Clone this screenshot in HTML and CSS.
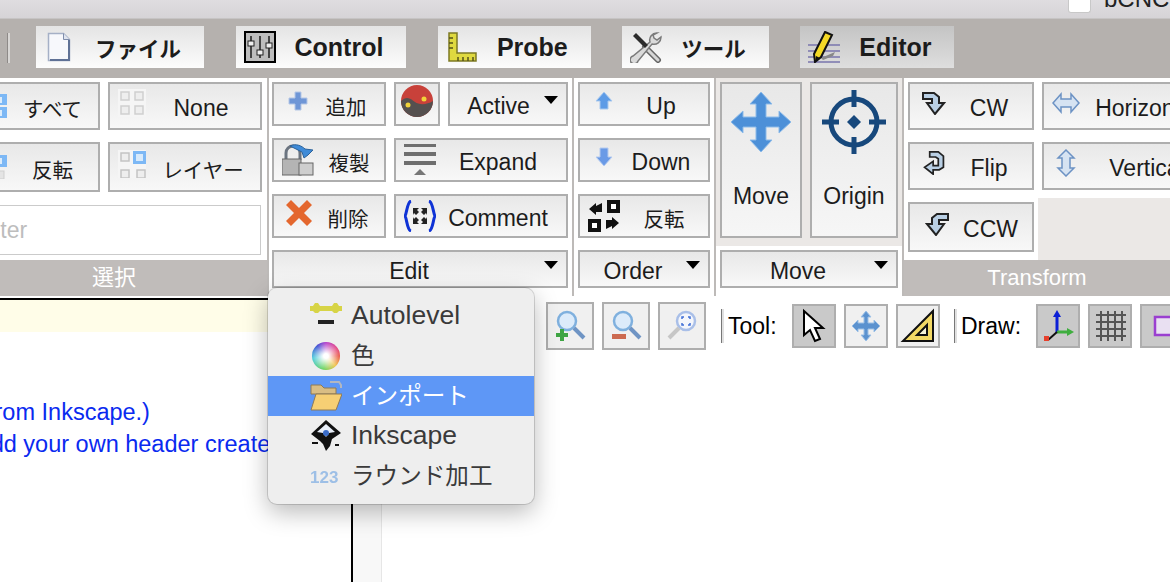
FILE: index.html
```html
<!DOCTYPE html>
<html lang="ja">
<head>
<meta charset="utf-8">
<title>bCNC</title>
<link rel="stylesheet" href="styles.css">
</head>
<body>
<div class="titlebar"><span class="winbox"></span><span class="wintitle">bCNC</span></div>

<div class="tabbar">
  <span class="tabsep"></span>
  <div class="tab">
    <svg class="tabicon" viewBox="0 0 32 32"><path d="M4.500 2.500h15l6 6v21h-21z" fill="#f7f8fc" stroke="#a5b0c6" stroke-width="1.500"/><path d="M19.500 2.500v6h6" fill="#dfe4ee" stroke="#7f8dab"/><path d="M25 9v20H6" fill="none" stroke="#5f7196" stroke-width="2"/></svg>
    <span class="cj">ファイル</span>
  </div>
  <div class="tab">
    <svg class="tabicon" viewBox="0 0 32 32"><rect x="1" y="1" width="30" height="30" fill="#bdbdbd" stroke="#000" stroke-width="2"/><path d="M7 5v22M16 5v22M25 5v22" stroke="#444" stroke-width="2"/><rect x="4" y="10" width="6" height="5" fill="#eee" stroke="#222"/><rect x="13" y="19" width="6" height="5" fill="#eee" stroke="#222"/><rect x="22" y="12" width="6" height="5" fill="#eee" stroke="#222"/></svg>
    <span>Control</span>
  </div>
  <div class="tab tab-probe">
    <svg class="tabicon" viewBox="0 0 32 32"><path d="M3 2h8v20h19v8H3z" fill="#dfd93f" stroke="#7d7a24" stroke-width="1.500"/><path d="M3 7h4M3 12h4M3 17h4M12 30v-4M17 30v-4M22 30v-4M27 30v-4" stroke="#55531a" stroke-width="1.500"/></svg>
    <span>Probe</span>
  </div>
  <div class="tab">
    <svg class="tabicon" viewBox="0 0 32 32"><path d="M15 16l13 13" stroke="#666" stroke-width="6" stroke-linecap="round"/><path d="M15 16l13 13" stroke="#d6d6d6" stroke-width="3" stroke-linecap="round"/><path d="M27 2a7 7 0 0 0-7 9L3 25a4 4 0 1 0 5 5l14-17a7 7 0 0 0 9-7l-4 3-3-2-1-3z" fill="#dadada" stroke="#7b7b7b" stroke-width="1.500"/><path d="M3 5l3-3 12 12-3 3z" fill="#2c2c2c"/></svg>
    <span class="cj">ツール</span>
  </div>
  <div class="tab tab-active">
    <svg class="tabicon" viewBox="0 0 32 32"><path d="M0 14h32M0 20h32M0 26h32M0 31h32" stroke="#7a76ad" stroke-width="1.500"/><path d="M13 27l14-6-2 4-10 4z" fill="#888"/><path d="M17 1l7 3-11 22-6 5-1-8z" fill="#f4d926" stroke="#111" stroke-width="2"/><path d="M8 25l-1 6 5-4z" fill="#111"/></svg>
    <span>Editor</span>
  </div>
</div>

<div class="ribbon">
  <section class="group g-select">
    <div class="select-grid">
      <button class="btn"><svg class="ic ic-all" viewBox="0 0 24 24"><rect x="0" y="0" width="24" height="11" fill="#7db8f5"/><rect x="0" y="13" width="24" height="11" fill="#7db8f5"/><rect x="13" y="3" width="6" height="6" fill="#dcecfb"/><rect x="13" y="16" width="6" height="6" fill="#dcecfb"/></svg><span class="lbl cj">すべて</span></button>
      <button class="btn"><svg class="ic ic28" viewBox="0 0 28 28"><rect width="28" height="28" fill="#f5f5f5"/><g fill="#eee" stroke="#cfcfcf" stroke-width="1.500"><rect x="3" y="3" width="8" height="8"/><rect x="17" y="3" width="8" height="8"/><rect x="3" y="17" width="8" height="8"/><rect x="17" y="17" width="8" height="8"/></g></svg><span class="lbl lbl-none">None</span></button>
      <button class="btn"><svg class="ic ic-all" viewBox="0 0 24 24"><rect x="0" y="0" width="24" height="12" fill="#7db8f5"/><rect x="13" y="3" width="6" height="6" fill="#dcecfb"/><rect x="13" y="16" width="8" height="8" fill="#e4e4e4" stroke="#cfcfcf"/></svg><span class="lbl cj">反転</span></button>
      <button class="btn"><svg class="ic ic28" viewBox="0 0 28 28"><rect width="28" height="28" fill="#f5f5f5"/><g fill="#eee" stroke="#c4c4c4" stroke-width="1.500"><rect x="3" y="3" width="8" height="8"/><rect x="3" y="20" width="8" height="8"/><rect x="19" y="20" width="8" height="8"/></g><rect x="15" y="1" width="13" height="13" fill="#7db8f5"/><rect x="18" y="4" width="7" height="7" fill="#d8eafb"/></svg><span class="lbl cj">レイヤー</span></button>
      <input class="filter" type="text" placeholder="Filter">
    </div>
    <div class="bar"><span class="cj">選択</span></div>
  </section>

  <section class="group g-edit">
    <button class="btn"><svg class="ic ic20" viewBox="0 0 20 20"><path d="M7 1h6v6h6v6h-6v6H7v-6H1V7h6z" fill="#6f96d6" stroke="#b5c7e6"/></svg><span class="lbl cj">追加</span></button>
    <button class="btn btn-tight"><svg class="ic32" viewBox="0 0 32 32"><circle cx="16" cy="16" r="16" fill="#c8413a"/><path d="M0 16c6-6 10-2 14 1s12 3 18-1a16 16 0 0 1-32 0z" fill="#55504f"/><circle cx="23" cy="14" r="2.500" fill="#f2d23a"/><circle cx="7" cy="20" r="2.500" fill="#f2d23a"/></svg></button>
    <button class="btn"><span class="lbl lbl-active">Active</span><i class="caret"></i></button>
    <button class="btn"><svg class="ic ic32" viewBox="0 0 32 32"><path d="M4 16V9a7 7 0 0 1 14 0v7" fill="none" stroke="#6b7480" stroke-width="3"/><rect x="0" y="15" width="19" height="16" fill="#b4b4b4" stroke="#666"/><rect x="17" y="19" width="14" height="12" fill="#cecece" stroke="#666"/><path d="M8 2c6-3 12 0 15 3l8 1-5 5-4 3-2-6z" fill="#3f8bd8" stroke="#2c6299"/></svg><span class="lbl cj">複製</span></button>
    <button class="btn span2"><svg class="ic ic32" viewBox="0 0 32 32"><path d="M0 1h32M0 10h32M0 19h32" stroke="#6e6e6e" stroke-width="4"/><path d="M10 31l6-6 6 6z" fill="#777"/></svg><span class="lbl lbl-wide">Expand</span></button>
    <button class="btn"><svg class="ic ic26" viewBox="0 0 26 26"><path d="M5 0l8 8 8-8 5 5-8 8 8 8-5 5-8-8-8 8-5-5 8-8-8-8z" fill="#e4672e"/></svg><span class="lbl cj">削除</span></button>
    <button class="btn span2"><svg class="ic ic32" viewBox="0 0 32 32"><path d="M7 1C3 2 3 13 1 16c2 3 2 14 6 15M25 1c4 1 4 12 6 15-2 3-2 14-6 15" fill="none" stroke="#0f33d6" stroke-width="3"/><path d="M9 8h6l-2 2 2 2-3 3-2-2-1 2zM23 8h-6l2 2-2 2 3 3 2-2 1 2zM9 24h6l-2-2 2-2-3-3-2 2-1-2zM23 24h-6l2-2-2-2 3-3 2 2 1-2z" fill="#222"/></svg><span class="lbl lbl-wide">Comment</span></button>
    <button class="btn span3"><span class="lbl">Edit</span><i class="caret"></i></button>
  </section>

  <section class="group g-order">
    <button class="btn"><svg class="ic ic20" viewBox="0 0 20 20"><path d="M10 1l8 9h-4v8H6v-8H2z" fill="#5d9be6" stroke="#a9c9ef"/></svg><span class="lbl">Up</span></button>
    <button class="btn"><svg class="ic ic20" viewBox="0 0 20 20"><path d="M6 1h8v9h4l-8 9-8-9h4z" fill="#6a9ae6" stroke="#b4caef"/></svg><span class="lbl">Down</span></button>
    <button class="btn"><svg class="ic ic32" viewBox="0 0 32 32"><path d="M21 2h9v9h-9zM2 21h9v9H2z" fill="#fff" stroke="#111" stroke-width="4"/><path d="M14 3v9H8v3L1 9l7-6v3zM18 29v-9h6v-3l7 6-7 6v-3z" fill="#111"/></svg><span class="lbl cj">反転</span></button>
    <button class="btn"><span class="lbl">Order</span><i class="caret"></i></button>
  </section>

  <section class="group g-move">
    <div class="big-row">
      <button class="btn big"><svg class="big-ic" viewBox="0 0 60 60"><path d="M30 0l11 12h-6v13h13v-6l12 11-12 11v-6H35v13h6L30 60 19 48h6V35H12v6L0 30l12-11v6h13V12h-6z" fill="#4d90d8" stroke="#8dbbe9"/></svg><span>Move</span></button>
      <button class="btn big big-o"><svg class="big-ic" viewBox="0 0 64 64"><circle cx="32" cy="32" r="23" fill="none" stroke="#17487c" stroke-width="5"/><path d="M32 0v17M32 47v17M0 32h17M47 32h17" stroke="#17487c" stroke-width="5"/><path d="M32 25l7 7-7 7-7-7z" fill="#17487c"/></svg><span>Origin</span></button>
    </div>
    <button class="btn move-drop"><span class="lbl">Move</span><i class="caret"></i></button>
  </section>

  <section class="group g-transform">
    <div class="tf-grid">
      <button class="btn"><svg class="ic ic24" viewBox="0 0 24 24"><path d="M1 2h11l5 4v6h5l-9 11-8-11h5V8H1z" fill="#b9cfe4" stroke="#222" stroke-width="2"/></svg><span class="lbl">CW</span></button>
      <button class="btn"><svg class="ic ic28" viewBox="0 0 28 20"><path d="M9 1v5h10V1l8 9-8 9v-5H9v5L1 10z" fill="#d6e3f2" stroke="#6c92c4" stroke-width="1.500"/></svg><span class="lbl">Horizontal</span></button>
      <button class="btn"><svg class="ic ic24" viewBox="0 0 24 28"><path d="M7 1h10l6 5v13l-5 3H11v5L1 19l10-7v5h6V9l-3-2H7z" fill="#b9cfe4" stroke="#222" stroke-width="2"/></svg><span class="lbl">Flip</span></button>
      <button class="btn"><svg class="ic ic28" viewBox="0 0 28 28"><path d="M14 1l8 8h-4v10h4l-8 8-8-8h4V9H6z" fill="#d6e3f2" stroke="#6c92c4" stroke-width="1.500"/></svg><span class="lbl">Vertical</span></button>
      <button class="btn"><svg class="ic ic24 ic-ccw" viewBox="0 0 24 24"><path d="M23 2H12L7 6v6H2l9 11 8-11h-5V8h9z" fill="#b9cfe4" stroke="#222" stroke-width="2"/></svg><span class="lbl">CCW</span></button>
      <div class="tf-empty"></div>
    </div>
    <div class="bar">Transform</div>
  </section>
</div>

<div class="work">
  <div class="editor">
    <div class="note"></div>
    <p class="line line-a">from Inkscape.)</p>
    <p class="line line-b">Add your own header created by</p>
  </div>
  <div class="scroll"></div>
  <div class="canvas">
    <div class="tools">
      <button class="tbtn tbtn-z"><svg viewBox="0 0 32 32"><circle cx="13" cy="11" r="9" fill="#dcebfa" stroke="#7fb0de" stroke-width="2.500"/><path d="M20 18l10 10" stroke="#6f94c4" stroke-width="4"/><path d="M6 19h4v4h4v4h-4v4H6v-4H2v-4h4z" fill="#3fa544"/></svg></button>
      <button class="tbtn tbtn-z"><svg viewBox="0 0 32 32"><circle cx="13" cy="11" r="9" fill="#dcebfa" stroke="#7fb0de" stroke-width="2.500"/><path d="M20 18l10 10" stroke="#6f94c4" stroke-width="4"/><rect x="2" y="24" width="14" height="5" fill="#cc6a50"/></svg></button>
      <button class="tbtn tbtn-z"><svg viewBox="0 0 32 32"><circle cx="20" cy="11" r="9" fill="#f4f6fb" stroke="#a9bfe8" stroke-width="2.500"/><path d="M13 18L3 28" stroke="#c6c6c6" stroke-width="4"/><path d="M16 9V7h2M24 9V7h-2M16 13v2h2M24 13v2h-2" fill="none" stroke="#3f6fd8" stroke-width="1.500"/></svg></button>
      <span class="vsep"></span>
      <span class="tlabel">Tool:</span>
      <button class="tbtn on"><svg viewBox="0 0 32 32"><path d="M6 1v24l6-5 5 11 5-2-5-11h8z" fill="#fff" stroke="#000" stroke-width="2"/></svg></button>
      <button class="tbtn"><svg viewBox="0 0 32 32"><path d="M16 1l5 6h-3v6h6v-3l6 6-6 6v-3h-6v6h3l-5 6-5-6h3v-6H8v3l-6-6 6-6v3h6V7h-3z" fill="#5b92cf" stroke="#9cc0e6"/></svg></button>
      <button class="tbtn"><svg viewBox="0 0 32 32"><path d="M31 1v30H1z" fill="#f2d865" stroke="#111" stroke-width="2"/><path d="M25 15v10H15z" fill="#f6f3d8" stroke="#111" stroke-width="2"/></svg></button>
      <span class="vsep vsep-b"></span>
      <span class="tlabel tlabel-b">Draw:</span>
      <button class="tbtn on"><svg viewBox="0 0 32 32"><path d="M15 4v19" stroke="#0b1fd6" stroke-width="3"/><path d="M15 0l4 7h-8z" fill="#0b1fd6"/><path d="M15 22h11" stroke="#3fae3f" stroke-width="3"/><path d="M32 22l-7 4v-8z" fill="#3fae3f"/><path d="M15 22l-9 8" stroke="#111" stroke-width="2"/><rect x="2" y="26" width="5" height="5" fill="#e6402c"/></svg></button>
      <button class="tbtn on"><svg viewBox="0 0 32 32"><path d="M7 1v30M14 1v30M21 1v30M28 1v30M2 5h30M2 12h30M2 19h30M2 26h30" stroke="#555" stroke-width="2"/></svg></button>
      <button class="tbtn on"><svg viewBox="0 0 32 32"><rect x="9" y="7" width="30" height="18" fill="#e9e0f2" stroke="#9a3fd0" stroke-width="2.500"/></svg></button>
    </div>
  </div>
</div>

<nav class="menu">
  <div class="item"><svg class="mi" viewBox="0 0 32 32"><path d="M0 6h3l2-3h3l2 3h12l2-3h3l2 3h3v5h-3l-2 2h-3l-2-2H10l-2 2H5l-2-2H0z" fill="#d7d446"/><rect x="8" y="20" width="16" height="4" fill="#222"/></svg><span class="itxt">Autolevel</span></div>
  <div class="item"><span class="wheel"></span><span class="itxt cj">色</span></div>
  <div class="item sel"><svg class="mi" viewBox="0 0 32 32"><path d="M1 5h10l3 3h12v6H1z" fill="#d9bd84" stroke="#8f7a55"/><path d="M1 30l5-16h26l-6 16z" fill="#f6cf74" stroke="#8f7a55"/><path d="M20 2h9l2 3v3" fill="none" stroke="#b3b7c0" stroke-width="2"/></svg><span class="itxt cj">インポート</span></div>
  <div class="item"><svg class="mi" viewBox="0 0 32 32"><path d="M16 0l15 13-9 6-2 7-4 5-3-7-3-3-9-7z" fill="#111"/><path d="M16 4l9 8-6 1-3 4-3-4-6-1z" fill="#e8eef8"/><circle cx="16" cy="13" r="3" fill="#3a6cc8"/><rect x="2" y="22" width="6" height="2" fill="#111"/><rect x="25" y="24" width="4" height="2" fill="#111"/></svg><span class="itxt">Inkscape</span></div>
  <div class="item"><svg class="mi" viewBox="0 0 32 32"><text class="mi-num" x="0" y="23">123</text></svg><span class="itxt cj">ラウンド加工</span></div>
</nav>
</body>
</html>
```

FILE: styles.css
```css
* { box-sizing: border-box; }
html, body { margin: 0; height: 582px; overflow: hidden; background: #fff; }
body {
  position: relative;
  width: 1170px;
  display: flex;
  flex-direction: column;
  font-family: "Liberation Sans", "Noto Sans CJK JP", sans-serif;
  color: #1c1c1c;
}
svg { display: block; flex: none; filter: blur(.35px); }
.cj { font-size: .89em; }

/* window title */
.titlebar {
  height: 19px;
  flex: none;
  background: linear-gradient(#dfdde0, #d6d4d7);
  border-bottom: 1px solid #c6c4c4;
  overflow: hidden;
  display: flex;
  padding-left: 1068px;
  gap: 13px;
}
.winbox { width: 23px; height: 13px; background: #fff; border: 1px solid #c8c8c8; border-top: 0; border-radius: 0 0 3px 3px; flex: none; }
.wintitle { font-size: 24px; line-height: 24px; margin-top: -13px; color: #222; }

/* tabs */
.tabbar {
  height: 59px;
  flex: none;
  background: #b5b1ae;
  display: flex;
  align-items: flex-start;
  padding: 7px 0 0 36px;
  gap: 31.500px;
  position: relative;
}
.tabsep { position: absolute; left: 7px; top: 14px; width: 3px; height: 30px; background: #d8d6d4; border-left: 1px solid #8e8a88; }
.tab {
  height: 42px;
  display: flex;
  align-items: center;
  padding-right: 23px;
  background: linear-gradient(#e4e4e4, #fcfcfc);
  font-size: 25px;
  font-weight: 700;
  color: #1c1c1c;
}
.tab .cj { font-size: .86em; }
.tab-active { background: linear-gradient(#c4c4c4, #dedede); }
.tabicon { width: 32px; height: 32px; margin: 0 19px 0 8px; }

/* ribbon */
.ribbon { height: 218px; flex: none; display: flex; overflow: hidden; }
.group { flex: none; border-right: 2px solid #bdbab8; padding: 4px 4px 0; height: 218px; }
.btn {
  font: inherit;
  font-size: 23px;
  color: #1c1c1c;
  border: 2px solid #aeaeae;
  background: linear-gradient(#e8e8e8, #f8f8f8);
  padding: 0;
  margin: 0;
  display: flex;
  align-items: center;
  min-width: 0;
  overflow: hidden;
  border-radius: 0;
}
.lbl { flex: 1; text-align: center; white-space: nowrap; padding-top: 4px; }
.lbl-none { padding-right: 4px; }
.lbl-active { padding-left: 3px; }
.lbl-wide { padding-right: 6px; }
.ic { margin-left: 12px; margin-top: -6px; }
.ic20 { width: 20px; height: 20px; margin-left: 14px; margin-top: -6px; }
.ic24 { width: 24px; height: 24px; }
.ic-ccw { margin-left: 15px; }
.ic26 { width: 26px; height: 26px; }
.ic28 { width: 28px; height: 28px; margin-left: 8px; }
.ic32 { width: 32px; height: 32px; margin-left: 8px; margin-top: 0; }
.ic32:not(.ic) { margin: 0 0 6px 5px; }
.caret { flex: none; width: 0; height: 0; margin: 0 8px 8px 0; border: 7px solid transparent; border-top: 8px solid #000; border-bottom: 0; }

.g-select { width: 269px; padding: 0; overflow: hidden; position: relative; }
.select-grid {
  margin: 4px 5px 0 -39px;
  display: grid;
  grid-template-columns: 139px 154px;
  grid-template-rows: 48px 50px 50px;
  column-gap: 8px;
  row-gap: 12px;
  height: 174px;
}
.ic-all { width: 24px; height: 24px; margin-left: 20px; margin-top: 0; }
.filter {
  grid-column: 1 / 3;
  margin: 1px 1px 0 0;
  height: 50px;
  border: 1px solid #cbcbcb;
  background: #fff;
  padding: 0 14px;
  font: 23px "Liberation Sans", sans-serif;
  outline: 0;
}
.filter::placeholder { color: #bdbdbd; opacity: 1; }
.bar {
  height: 36px;
  margin-top: 4px;
  background: #c0bcba;
  color: #fff;
  font-size: 22px;
  line-height: 36px;
  text-align: center;
}
.g-select .bar { margin-left: -39px; margin-right: 0; }
.bar .cj { font-size: 1em; }

.g-edit {
  width: 305px;
  padding-left: 3px;
  display: grid;
  grid-template-columns: 114px 46px 120px;
  grid-template-rows: 44px 44px 44px 38px;
  column-gap: 8px;
  row-gap: 12px;
  align-content: start;
}
.span2 { grid-column: span 2; }
.span3 { grid-column: span 3; }

.g-order {
  width: 142px;
  display: grid;
  grid-template-columns: 132px;
  grid-template-rows: 44px 44px 44px 38px;
  row-gap: 12px;
  align-content: start;
}
.g-move { width: 188px; padding: 0; display: flex; flex-direction: column; }
.big-row { height: 168px; flex: none; background: #ebe8e6; padding: 4px 4px 8px; display: flex; gap: 8px; }
.big {
  flex-direction: column;
  width: 82px;
  height: 156px;
  padding-top: 8px;
  background: linear-gradient(#e8e8e8, #f6f6f6);
}
.big-o { width: 88px; padding-top: 6px; }
.big-ic { width: 60px; height: 60px; margin-bottom: 31px; }
.big-o .big-ic { width: 64px; height: 64px; margin-bottom: 29px; }
.move-drop { margin: 4px 4px 0; height: 38px; }

.g-transform { flex: 1; border-right: 0; padding: 0; min-width: 0; overflow: hidden; }
.tf-grid {
  height: 182px;
  padding: 4px 0 0 4px;
  display: grid;
  grid-template-columns: 126px 174px;
  grid-template-rows: 48px 48px 50px;
  column-gap: 8px;
  row-gap: 12px;
  position: relative;
}
.tf-empty { margin: -4px -100px -8px -4px; background: #ebe8e6; }
.g-transform .bar { margin-top: 0; }

/* lower work area */
.work { flex: 1; display: flex; padding-top: 2px; min-height: 0; }
.editor {
  width: 353px;
  flex: none;
  border-top: 2px solid #000;
  border-right: 2px solid #000;
  overflow: hidden;
  color: #0a2af0;
  font-size: 23.500px;
  white-space: nowrap;
}
.note { height: 32px; background: #fffde8; margin-bottom: 64px; }
.line { margin: 0; height: 32px; line-height: 32px; }
.line-a { margin-left: -12px; }
.line-b { margin-left: -25px; }
.scroll { width: 29px; flex: none; background: #f8f8f8; border-right: 1px solid #e6e6e6; }
.canvas { flex: 1; min-width: 0; overflow: hidden; padding: 4px 0 0 164px; }
.tools { display: flex; align-items: center; height: 48px; width: 640px; }
.tbtn {
  width: 44px;
  height: 44px;
  flex: none;
  margin-right: 8px;
  border: 2px solid #aeaeae;
  background: #f0f0f0;
  padding: 4px;
  overflow: hidden;
}
.tbtn svg { width: 32px; height: 32px; overflow: visible; }
.tbtn-z { width: 48px; height: 48px; padding: 6px; }
.on { background: #c9c9c9; }
.vsep { width: 3px; height: 34px; margin: 0 4px 0 7px; background: #e0e0e0; border-left: 1px solid #777; flex: none; }
.vsep-b { margin-left: 6px; margin-right: 4px; }
.tlabel { font-size: 23px; color: #000; margin-right: 14px; width: 50px; flex: none; white-space: nowrap; }
.tlabel-b { width: 61px; }

/* popup menu */
.menu {
  position: absolute;
  left: 268px;
  top: 288px;
  width: 266px;
  height: 216px;
  padding-top: 8px;
  background: #eeeeee;
  border-radius: 9px;
  box-shadow: 0 0 0 1px rgba(0, 0, 0, .14), 0 8px 24px rgba(0, 0, 0, .28);
  color: #3a3a3a;
  font-size: 26.500px;
  overflow: hidden;
  clip-path: inset(-40px -40px -40px -40px round 9px);
}
.item { height: 40px; display: flex; align-items: center; padding-left: 42px; gap: 9px; white-space: nowrap; }
.itxt { margin-bottom: 2px; }
.itxt.cj { margin-bottom: 5px; }
.sel { background: #5e97f6; color: #fff; }
.mi { width: 32px; height: 32px; }
.mi-num { font-size: 17px; font-weight: 700; fill: #9dbfe6; font-family: "Liberation Sans", sans-serif; }
.wheel {
  width: 28px;
  height: 28px;
  margin: 0 2px;
  border-radius: 50%;
  flex: none;
  background: radial-gradient(circle, #fff 12%, rgba(255, 255, 255, 0) 74%), conic-gradient(#b030c8 0deg, #e03a80 50deg, #e84a3a 90deg, #f0c040 135deg, #60d050 190deg, #40c8d8 260deg, #3040d0 320deg, #b030c8 360deg);
}
```
